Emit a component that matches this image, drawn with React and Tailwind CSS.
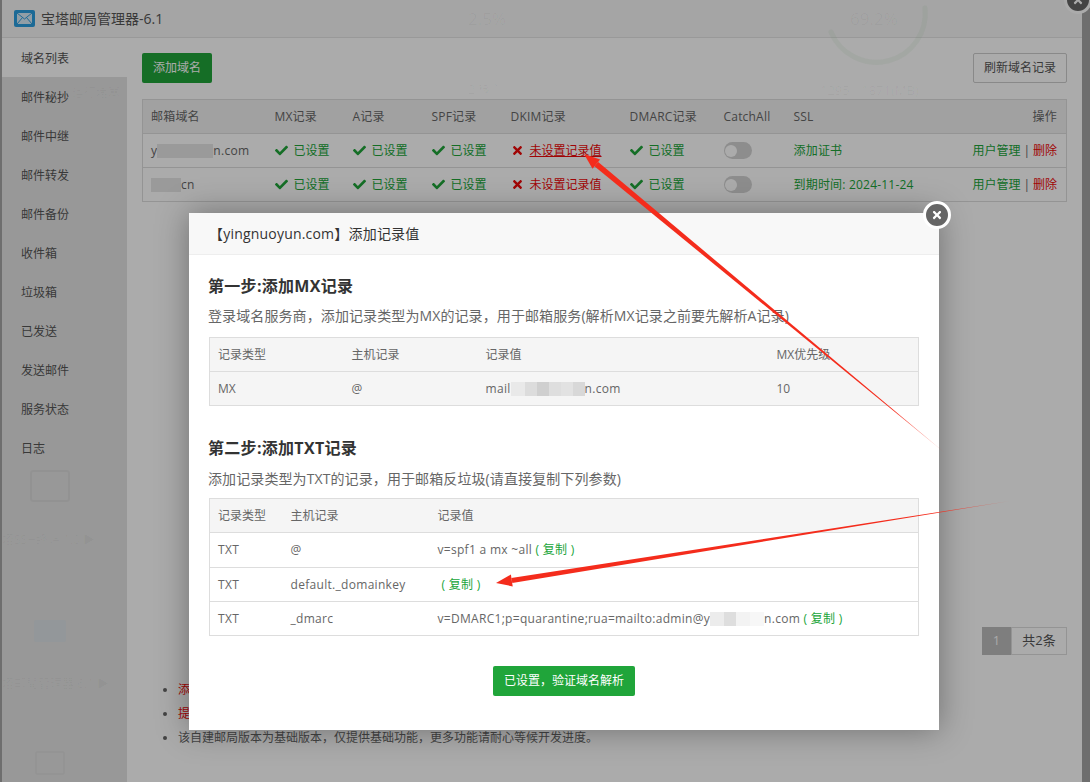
import { FaCheck, FaTimes } from 'react-icons/fa';

const navItems = ['域名列表', '邮件秘抄', '邮件中继', '邮件转发', '邮件备份', '收件箱', '垃圾箱', '已发送', '发送邮件', '服务状态', '日志'];

const domains = [
  { head: 'y', tail: 'n.com', patch: 'w-[56px]', ssl: '添加证书', link: true },
  { head: '', tail: 'cn', patch: 'w-[30px]', ssl: '到期时间: 2024-11-24', link: false },
];

function Status() {
  return (
    <span className="flex items-center text-[#20a53a]">
      <FaCheck className="w-[13px] h-[13px] mr-[6px]" />
      已设置
    </span>
  );
}

function Toggle() {
  return (
    <div className="w-[28px] h-[17px] rounded-full bg-[#d2d2d2] flex items-center pl-[1px]">
      <div className="w-[12px] h-[12px] rounded-full bg-white"></div>
    </div>
  );
}

function Copy({ className = '' }) {
  return <span className={`text-[#20a53a] ${className}`}>( 复制 )</span>;
}

function Mosaic({ children }) {
  return <span className="inline-flex h-[14px] align-middle">{children}</span>;
}

function MailIcon() {
  return (
    <svg width="21" height="17" viewBox="0 0 21 17" className="mr-[6px]">
      <rect x="0" y="0" width="21" height="17" rx="2" fill="#2b9ee0" />
      <rect x="3" y="3" width="15" height="11" fill="#d8ecf8" />
      <path d="M3 3l7.5 6L18 3M3 14l5.5-6.5M18 14l-5.5-6.5" fill="none" stroke="#2b9ee0" strokeWidth="1" />
    </svg>
  );
}

function Arrows() {
  return (
    <svg width="1090" height="782" className="absolute inset-0 pointer-events-none">
      <defs>
        <linearGradient id="fadeOne" gradientUnits="userSpaceOnUse" x1="596" y1="164" x2="945" y2="453">
          <stop offset="0" stopColor="#f42c1c" />
          <stop offset="0.85" stopColor="#f42c1c" />
          <stop offset="1" stopColor="#f42c1c" stopOpacity="0.3" />
        </linearGradient>
        <linearGradient id="fadeTwo" gradientUnits="userSpaceOnUse" x1="512" y1="580" x2="1010" y2="501">
          <stop offset="0" stopColor="#f42c1c" />
          <stop offset="0.85" stopColor="#f42c1c" />
          <stop offset="1" stopColor="#f42c1c" stopOpacity="0.3" />
        </linearGradient>
      </defs>
      <polygon points="598.2,162.1 594.4,166.3 945,453" fill="url(#fadeOne)" />
      <polygon points="584,154 600.1,159.6 592.5,168.8" fill="#f42c1c" />
      <polygon points="512.3,583 511.3,578 1010,501" fill="url(#fadeTwo)" />
      <polygon points="496,583 512.7,586.4 510.9,574.6" fill="#f42c1c" />
    </svg>
  );
}

// faint shapes of the panel that shows through the plugin window
function GhostLayer() {
  return (
    <div className="absolute inset-0 text-black/[.035] pointer-events-none">
      <span className="absolute left-[468px] top-[6px] text-[17px]">2.5%</span>
      <span className="absolute left-[850px] top-[6px] text-[17px]">69.2%</span>
      <span className="absolute left-[468px] top-[81px] text-[12px]">2 核心</span>
      <span className="absolute left-[820px] top-[81px] text-[13px]">1295 / 1871(MB)</span>
      <span className="absolute left-[72px] top-[84px] text-[12px]">运行堵塞</span>
      <span className="absolute left-[2px] top-[531px] text-[12px] whitespace-nowrap">塔SSH终端 1.0 ▶</span>
      <span className="absolute left-[2px] top-[675px] text-[12px] whitespace-nowrap">塔邮局管理器 6.1 ▶</span>
      <svg width="1090" height="782" className="absolute inset-0">
        <path d="M831 32A49 49 0 0 0 925 8" fill="none" stroke="#5f8a5f" strokeOpacity="0.1" strokeWidth="5" strokeLinecap="round" />
        <rect x="31" y="471" width="38" height="30" rx="2" fill="none" stroke="#000" strokeOpacity="0.035" strokeWidth="2" />
        <rect x="34" y="620" width="32" height="22" rx="2" fill="#5f8fb0" fillOpacity="0.08" />
        <rect x="36" y="752" width="28" height="22" rx="1" fill="none" stroke="#000" strokeOpacity="0.035" strokeWidth="1.5" />
      </svg>
    </div>
  );
}

export default function App() {
  return (
    <div className="relative w-[1090px] h-[782px] overflow-hidden bg-[#a5a5a5] text-[12px] text-[#666] font-['Open_Sans','Noto_Sans_CJK_SC',sans-serif]">

      {/* plugin window behind the dialog */}
      <div className="ml-[2px] w-[1080px] h-full bg-white flex flex-col">
        <div className="h-[38px] shrink-0 bg-[#f6f6f6] border-b border-[#e4e4e4] flex items-center pl-[12px] text-[14px] text-[#555]">
          <MailIcon />
          宝塔邮局管理器-6.1
        </div>

        <div className="flex-1 flex">
          <div className="w-[125px] shrink-0 bg-[#e3e3e3]">
            {navItems.map((item, i) => (
              <div key={item} className={`h-[39px] flex items-center pl-[19px] pt-[2px] text-[#555] ${i === 0 ? 'bg-white' : ''}`}>{item}</div>
            ))}
          </div>

          <div className="flex-1 pt-[15px] pl-[15px] pr-[15px]">
            <div className="flex justify-between items-center h-[30px]">
              <button className="w-[70px] h-[30px] bg-[#20a53a] text-white rounded-[2px]">添加域名</button>
              <button className="w-[94px] h-[30px] bg-white border border-[#ccc] text-[#555] rounded-[2px]">刷新域名记录</button>
            </div>

            <table className="mt-[16px] w-full table-fixed border border-[#ddd] border-collapse">
              <colgroup>
                <col className="w-[124px]" />
                <col className="w-[78px]" />
                <col className="w-[79px]" />
                <col className="w-[79px]" />
                <col className="w-[119px]" />
                <col className="w-[94px]" />
                <col className="w-[70px]" />
                <col className="w-[170px]" />
                <col />
              </colgroup>
              <thead>
                <tr className="h-[34px] bg-[#f1f1f1] text-left tracking-[.2px]">
                  {['邮箱域名', 'MX记录', 'A记录', 'SPF记录', 'DKIM记录', 'DMARC记录', 'CatchAll', 'SSL'].map((h) => (
                    <th key={h} className="pl-[8px] font-normal">{h}</th>
                  ))}
                  <th className="pr-[9px] font-normal text-right">操作</th>
                </tr>
              </thead>
              <tbody>
                {domains.map((d, i) => (
                  <tr key={i} className="h-[34px] border-t border-[#ddd]">
                    <td className="pl-[8px] whitespace-nowrap tracking-[.3px]">
                      {d.head}<span className={`inline-block h-[14px] align-middle bg-[#e6e6e6] ${d.patch}`}></span>{d.tail}
                    </td>
                    <td className="pl-[8px]"><Status /></td>
                    <td className="pl-[8px]"><Status /></td>
                    <td className="pl-[8px]"><Status /></td>
                    <td className="pl-[8px]">
                      <span className="flex items-center text-[#ef0808]">
                        <FaTimes className="w-[13px] h-[13px] mr-[6px]" />
                        <span className={i === 0 ? 'underline' : ''}>未设置记录值</span>
                      </span>
                    </td>
                    <td className="pl-[8px]"><Status /></td>
                    <td className="pl-[8px]"><Toggle /></td>
                    <td className="pl-[8px] text-[#20a53a] whitespace-nowrap tracking-[.2px]">{d.ssl}</td>
                    <td className="pr-[9px] text-right whitespace-nowrap">
                      <span className="text-[#20a53a]">用户管理</span>
                      <span className="mx-[3px]">|</span>
                      <span className="text-[#ef0808]">删除</span>
                    </td>
                  </tr>
                ))}
              </tbody>
            </table>

            <div className="mt-[425px] flex justify-end">
              <span className="w-[29px] h-[28px] bg-[#bdbdbd] text-white flex items-center justify-center">1</span>
              <span className="w-[56px] h-[28px] border border-[#ddd] flex items-center justify-center text-[13px] text-[#555]">共2条</span>
            </div>

            <ul className="mt-[23px] pl-[36px] list-disc leading-[24px] marker:text-[#666]">
              <li className="text-[#ef0808]">添加域名后，请先设置解析记录再使用邮局功能。</li>
              <li className="text-[#ef0808]">提示：请确保服务器25端口已放行。</li>
              <li>该自建邮局版本为基础版本，仅提供基础功能，更多功能请耐心等候开发进度。</li>
            </ul>
          </div>
        </div>
      </div>

      {/* window close button, mostly off the top edge */}
      <div className="absolute left-[1064px] top-[-14px] w-[28px] h-[28px] rounded-full bg-[#666] border-[3px] border-white flex items-center justify-center text-white">
        <FaTimes className="w-[12px] h-[12px]" />
      </div>

      <div className="absolute inset-0 bg-black/[.33]"></div>
      <GhostLayer />

      {/* record dialog */}
      <div className="absolute left-[189px] top-[213px] w-[750px] h-[517px] bg-white shadow-[0_0_30px_rgba(0,0,0,0.35)]">
        <div className="h-[42px] bg-[#f8f8f8] border-b border-[#eee] flex items-center pl-[20px] text-[14px] text-[#333] tracking-[.2px]">
          【yingnuoyun.com】添加记录值
        </div>

        <div className="px-[20px]">
          <h3 className="mt-[20px] text-[16px] leading-[22px] font-bold text-[#333] -ml-[1px] tracking-[.3px]">第一步:添加MX记录</h3>
          <p className="mt-[9px] text-[14px] leading-[20px] -ml-[1px] tracking-[.1px]">登录域名服务商，添加记录类型为MX的记录，用于邮箱服务(解析MX记录之前要先解析A记录)</p>

          <table className="mt-[11px] w-full table-fixed border border-[#ddd] border-collapse bg-[#f5f5f5]">
            <colgroup>
              <col className="w-[134px]" />
              <col className="w-[134px]" />
              <col className="w-[291px]" />
              <col />
            </colgroup>
            <tbody>
              <tr className="h-[34px]">
                <td className="pl-[8px]">记录类型</td>
                <td className="pl-[8px]">主机记录</td>
                <td className="pl-[8px]">记录值</td>
                <td className="pl-[8px]">MX优先级</td>
              </tr>
              <tr className="h-[34px] border-t border-[#ddd]">
                <td className="pl-[8px]">MX</td>
                <td className="pl-[8px]">@</td>
                <td className="pl-[8px] whitespace-nowrap tracking-[.3px]">
                  mail<Mosaic>
                    <span className="w-[14px] bg-[#e9e9e9]"></span>
                    <span className="w-[12px] bg-[#dcdcdc]"></span>
                    <span className="w-[12px] bg-[#cfcfcf]"></span>
                    <span className="w-[12px] bg-[#dedede]"></span>
                    <span className="w-[12px] bg-[#e2e2e2]"></span>
                    <span className="w-[12px] bg-[#d8d8d8]"></span>
                  </Mosaic>n.com
                </td>
                <td className="pl-[8px]">10</td>
              </tr>
            </tbody>
          </table>

          <h3 className="mt-[31px] text-[16px] leading-[22px] font-bold text-[#333] -ml-[1px] tracking-[.3px]">第二步:添加TXT记录</h3>
          <p className="mt-[10px] text-[14px] leading-[20px] -ml-[1px] tracking-[.1px]">添加记录类型为TXT的记录，用于邮箱反垃圾(请直接复制下列参数)</p>

          <table className="mt-[9px] w-full table-fixed border border-[#ddd] border-collapse">
            <colgroup>
              <col className="w-[73px]" />
              <col className="w-[147px]" />
              <col />
            </colgroup>
            <thead>
              <tr className="h-[34px] bg-[#f5f5f5] text-left">
                <th className="pl-[8px] font-normal">记录类型</th>
                <th className="pl-[8px] font-normal">主机记录</th>
                <th className="pl-[8px] font-normal">记录值</th>
              </tr>
            </thead>
            <tbody className="tracking-[.3px]">
              <tr className="h-[35px] border-t border-[#ddd]">
                <td className="pl-[8px]">TXT</td>
                <td className="pl-[8px]">@</td>
                <td className="pl-[8px]">v=spf1 a mx ~all <Copy /></td>
              </tr>
              <tr className="h-[34px] border-t border-[#ddd]">
                <td className="pl-[8px]">TXT</td>
                <td className="pl-[8px]">default._domainkey</td>
                <td className="pl-[8px]"><Copy className="ml-[4px]" /></td>
              </tr>
              <tr className="h-[34px] border-t border-[#ddd]">
                <td className="pl-[8px]">TXT</td>
                <td className="pl-[8px]">_dmarc</td>
                <td className="pl-[8px] whitespace-nowrap">
                  v=DMARC1;p=quarantine;rua=mailto:admin@y<Mosaic>
                    <span className="w-[14px] bg-[#ececec]"></span>
                    <span className="w-[12px] bg-[#dedede]"></span>
                    <span className="w-[14px] bg-[#f3f3f3]"></span>
                    <span className="w-[14px] bg-[#f7f7f7]"></span>
                  </Mosaic>n.com <Copy />
                </td>
              </tr>
            </tbody>
          </table>

          <div className="mt-[30px] flex justify-center">
            <button className="w-[142px] h-[30px] bg-[#20a53a] text-white text-[12px] rounded-[2px]">已设置，验证域名解析</button>
          </div>
        </div>

        <div className="absolute right-[-12px] top-[-12px] w-[28px] h-[28px] rounded-full bg-[#666] border-[3px] border-white flex items-center justify-center text-white">
          <FaTimes className="w-[12px] h-[12px]" />
        </div>
      </div>

      <Arrows />
    </div>
  );
}
